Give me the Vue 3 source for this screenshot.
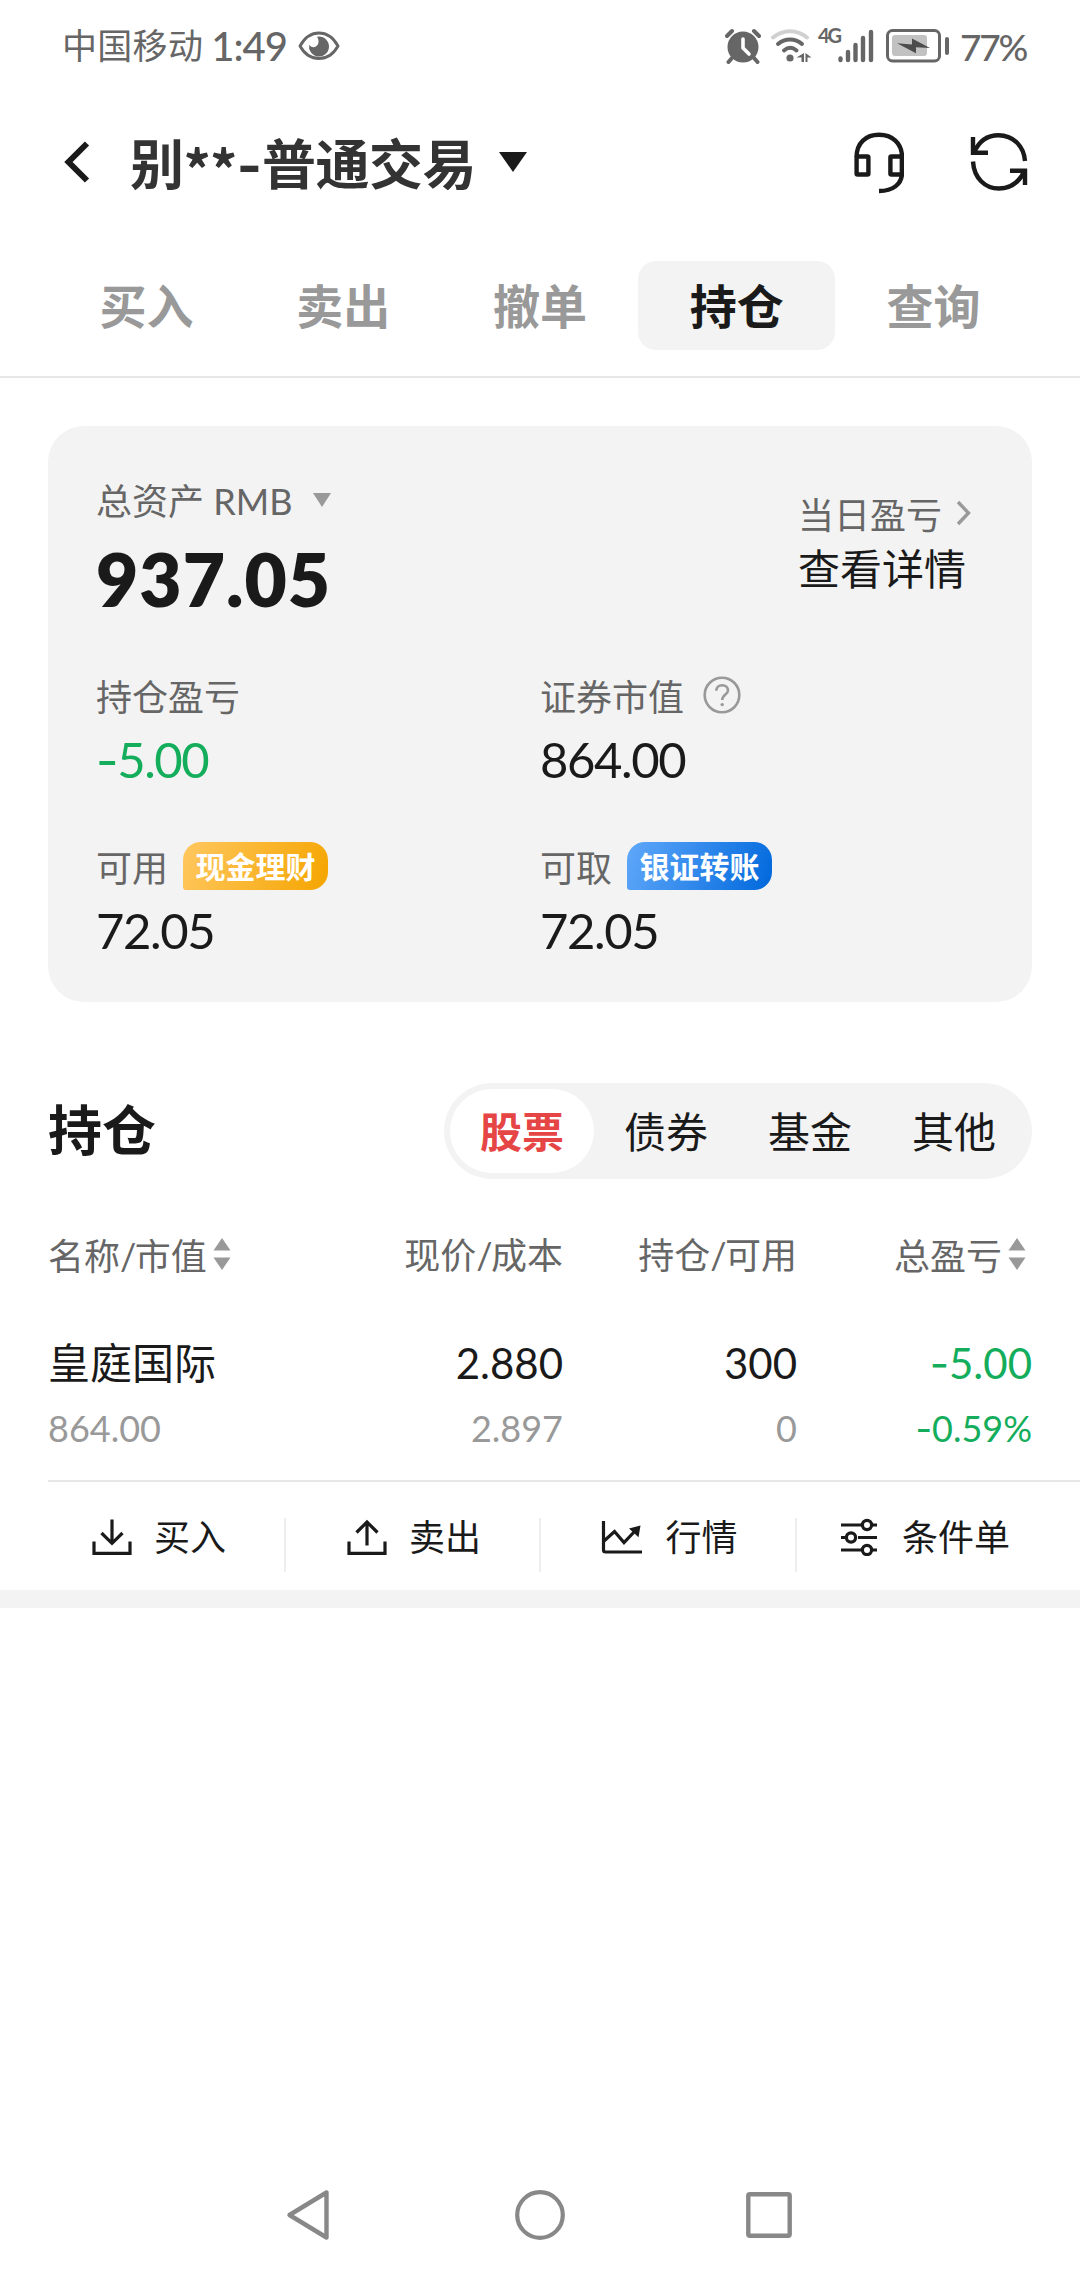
<script setup>
const tabs = ['买入', '卖出', '撤单', '持仓', '查询']
const activeTab = '持仓'
const kinds = ['股票', '债券', '基金', '其他']
const activeKind = '股票'
const holdings = [
  { name: '皇庭国际', value: '864.00', price: '2.880', cost: '2.897', qty: '300', avail: '0', profit: '5.00', rate: '0.59%' }
]
</script>

<template>
  <div class="screen">
    <header class="status">
      <span class="carrier">中国移动</span>
      <span class="time">1:49</span>
      <svg class="eye" width="42" height="30" viewBox="0 0 42 30">
        <path d="M2 15C7 6 13 2 21 2s14 4 19 13c-5 9-11 12.500-19 12.500S7 24 2 15Z" fill="none" stroke="#666" stroke-width="2.800" />
        <path d="M21 5.500a10 10 0 1 1-9.800 8c1.500 3 5 3.500 7.300 1.500 2.500-2 2.800-6 .5-9.300Z" fill="#666" />
      </svg>
      <span class="grow"></span>
      <svg class="alarm" width="36" height="36" viewBox="0 0 36 36">
        <circle cx="18" cy="19" r="15.500" fill="#666" />
        <path d="M2 8l5-5M34 8l-5-5M7 30l-3.500 4M29 30l3.500 4" stroke="#666" stroke-width="4" stroke-linecap="round" />
        <path d="M18 11v9l6 6" fill="none" stroke="#fff" stroke-width="3.600" stroke-linecap="round" stroke-linejoin="round" />
      </svg>
      <svg class="wifi" width="42" height="36" viewBox="0 0 42 36">
        <g fill="none" stroke-linecap="round" stroke-width="4">
          <path d="M3 9.500C13 1 27 1 37 9.500" stroke="#d0d0d0" />
          <path d="M8 16C15 10 25 10 32 16" stroke="#666" />
          <path d="M14 22.500c4-3.500 8.500-3.500 12.500 0" stroke="#666" />
        </g>
        <circle cx="20" cy="30" r="3.600" fill="#666" />
        <path d="M34 25v9h-2.500v-4.500h-5ZM35.500 25v9h2v-4.500h4Z" fill="#666" />
      </svg>
      <span class="net">4G</span>
      <svg class="bars" width="36" height="34" viewBox="0 0 36 34">
        <path d="M2.500 29.500v1.500M10 23v8M17.500 16v15M25 9v22M33 3v28" stroke="#666" stroke-width="4.400" stroke-linecap="round" />
      </svg>
      <svg class="battery" width="64" height="34" viewBox="0 0 64 34">
        <rect x="1.500" y="1.500" width="52" height="30.500" rx="5" fill="none" stroke="#666" stroke-width="3" />
        <rect x="6" y="6" width="35" height="21" rx="3" fill="#c2c2c2" />
        <path d="M11 14.200 26 15.500v-6l18 9.500-14-.8v6Z" fill="#4c4c4c" />
        <path d="M61 10v14" stroke="#666" stroke-width="4" stroke-linecap="round" />
      </svg>
      <span class="percent">77%</span>
    </header>

    <div class="titlebar">
      <svg class="back" width="26" height="42" viewBox="0 0 26 42">
        <path d="M23 2.500 4.500 21 23 39.500" fill="none" stroke="#1a1a1a" stroke-width="6" />
      </svg>
      <h1>别<span class="stars">**</span><span class="dash">-</span>普通交易</h1>
      <svg class="caret" width="28" height="20" viewBox="0 0 28 20"><path d="M0 0h28L14 20Z" fill="#1a1a1a" /></svg>
      <span class="grow"></span>
      <svg class="headset" width="50" height="62" viewBox="0 0 50 62">
        <g fill="none" stroke="#1a1a1a" stroke-width="4.400">
          <path d="M2.600 25C2.600 11 12 2.800 25 2.800S48 11 48 25v16c0 11-9 18-23 18" />
          <rect x="2.600" y="24.500" width="11.800" height="18" rx="1" />
          <rect x="36.400" y="24.500" width="11.600" height="18" rx="1" />
        </g>
      </svg>
      <svg class="refresh" width="58" height="60" viewBox="0 0 58 60">
        <g fill="none" stroke="#1a1a1a" stroke-width="4.400">
          <path d="M3 5v15.800h15M4 20.500C9 9 17.500 3.200 28.500 3.200 43 3.200 54 14 55 29" />
          <path d="M55 53V38.700H40M54.500 39C49 50.500 40.500 56.500 29 56.500 15 56.500 4 46 3 29.500" />
        </g>
      </svg>
    </div>

    <nav class="tabs">
      <span v-for="t in tabs" :key="t" :class="{ active: t === activeTab }">{{ t }}</span>
    </nav>

    <section class="card">
      <div class="total">
        <div>
          <div class="label">总资产 RMB<svg class="mini" width="18" height="14" viewBox="0 0 18 14"><path d="M0 0h18L9 14Z" fill="#999" /></svg></div>
          <div class="amount">937.05</div>
        </div>
        <div class="today">
          <div class="label">当日盈亏<svg class="chev" width="15" height="26" viewBox="0 0 15 26"><path d="M2 2l10.500 11L2 24" fill="none" stroke="#999" stroke-width="3.400" /></svg></div>
          <div class="detail">查看详情</div>
        </div>
      </div>
      <div class="metrics">
        <div>
          <div class="label">持仓盈亏</div>
          <div class="value green"><span class="minus">-</span>5.00</div>
        </div>
        <div>
          <div class="label">证券市值<svg class="help" width="38" height="38" viewBox="0 0 38 38">
            <g fill="none" stroke="#999" stroke-width="2.600">
              <circle cx="19" cy="19" r="17.300" />
              <path d="M13.300 14.800c0-3.600 2.500-5.600 5.900-5.600s5.800 2.200 5.800 5.200c0 4-5.800 4.300-5.800 9.600" />
            </g>
            <circle cx="19.200" cy="28.600" r="1.700" fill="#999" />
          </svg></div>
          <div class="value">864.00</div>
        </div>
        <div>
          <div class="label">可用<span class="badge gold">现金理财</span></div>
          <div class="value">72.05</div>
        </div>
        <div>
          <div class="label">可取<span class="badge blue">银证转账</span></div>
          <div class="value">72.05</div>
        </div>
      </div>
    </section>

    <section class="holdhead">
      <h2>持仓</h2>
      <div class="segment">
        <span v-for="k in kinds" :key="k" :class="{ on: k === activeKind }">{{ k }}</span>
      </div>
    </section>

    <div class="row thead">
      <span>名称<i>/</i>市值<svg class="sort" width="18" height="32" viewBox="0 0 18 32"><path d="M9 0l8.500 12.500H.5ZM9 32l8.500-12.500H.5Z" fill="#999" /></svg></span>
      <span>现价<i>/</i>成本</span>
      <span>持仓<i>/</i>可用</span>
      <span class="last">总盈亏<svg class="sort" width="18" height="32" viewBox="0 0 18 32"><path d="M9 0l8.500 12.500H.5ZM9 32l8.500-12.500H.5Z" fill="#999" /></svg></span>
    </div>
    <template v-for="h in holdings" :key="h.name">
      <div class="row main">
        <span>{{ h.name }}</span>
        <span>{{ h.price }}</span>
        <span>{{ h.qty }}</span>
        <span class="green"><span class="minus">-</span>{{ h.profit }}</span>
      </div>
      <div class="row sub">
        <span>{{ h.value }}</span>
        <span>{{ h.cost }}</span>
        <span>{{ h.avail }}</span>
        <span class="green"><span class="minus">-</span>{{ h.rate }}</span>
      </div>
    </template>

    <div class="actions">
      <div class="action">
        <svg width="40" height="38" viewBox="0 0 40 38"><g fill="none" stroke="#1a1a1a" stroke-width="3.200"><path d="M2 23.500v11.800h36V23.500" /><path d="M20 1.500v24M9.500 15 20 25.300 30.500 15" /></g></svg>
        <span>买入</span>
      </div>
      <div class="action">
        <svg width="40" height="38" viewBox="0 0 40 38"><g fill="none" stroke="#1a1a1a" stroke-width="3.200"><path d="M2 23.500v11.800h36V23.500" /><path d="M20 27.500V4M9.500 14.500 20 4l10.500 10.500" /></g></svg>
        <span>卖出</span>
      </div>
      <div class="action">
        <svg width="42" height="38" viewBox="0 0 42 38"><path d="M2.500 3v29q0 2 2 2H41M3 23l10.500-9.500L23 24.500 34 13" fill="none" stroke="#1a1a1a" stroke-width="3.200" /><path d="M39.500 7.500 28 10.500l9.500 8.800Z" fill="#1a1a1a" /></svg>
        <span>行情</span>
      </div>
      <div class="action">
        <svg width="38" height="38" viewBox="0 0 38 38"><g fill="none" stroke="#1a1a1a" stroke-width="3.200"><path d="M1 7h20.500M32 7h5M1 19.500h4M18 19.500h19M1 32h20.500M32 32h5" /><circle cx="27" cy="7" r="4.600" /><circle cx="11" cy="19.500" r="4.600" /><circle cx="27" cy="32" r="4.600" /></g></svg>
        <span>条件单</span>
      </div>
    </div>
    <div class="band"></div>

    <footer class="navbar">
      <svg width="44" height="52" viewBox="0 0 44 52"><path d="M40.500 3.500v45L3.500 26Z" fill="none" stroke="#888" stroke-width="4.400" stroke-linejoin="round" /></svg>
      <svg class="home" width="50" height="52" viewBox="0 0 50 52"><circle cx="25" cy="26" r="22.800" fill="none" stroke="#888" stroke-width="4.200" /></svg>
      <svg width="46" height="46" viewBox="0 0 46 46"><rect x="2.300" y="2.300" width="41.400" height="41.400" rx="1.500" fill="none" stroke="#888" stroke-width="4.400" /></svg>
    </footer>
  </div>
</template>

<style>
body { background: #fff; }
</style>

<style scoped>
.screen {
  width: 1080px;
  height: 2280px;
  display: flex;
  flex-direction: column;
  background: #fff;
  color: #1a1a1a;
  font-family: Lato, "Noto Sans CJK SC", sans-serif;
  overflow: hidden;
}
svg { display: block; flex: none; }
.grow { flex: 1; }
.status {
  height: 92px;
  margin-bottom: 1px;
  padding: 0 54px 0 62px;
  display: flex;
  align-items: center;
  color: #666;
  white-space: nowrap;
}
.carrier { font-size: 35px; letter-spacing: 0.3px; line-height: 44px; margin-top: -2px; }
.time { font-size: 40px; margin-left: 8px; letter-spacing: -1px; font-weight: 500; }
.eye { margin-left: 11px; }
.alarm { margin-right: 9px; }
.net { font-size: 20px; font-weight: 700; letter-spacing: -2px; width: 20px; margin: -22px 0 0 6px; }
.bars { margin-right: 12px; }
.percent { font-size: 37px; letter-spacing: -2.200px; margin-left: 10px; width: 66px; font-weight: 500; }
.titlebar {
  height: 142px;
  padding: 0 52px 0 64px;
  display: flex;
  align-items: center;
}
.back { margin-top: -4px; }
h1 {
  margin: 2px 0 0 40px;
  font-size: 54px;
  font-weight: 700;
  line-height: 70px;
  height: 70px;
  width: 342px;
  color: #333;
  letter-spacing: -0.500px;
  white-space: nowrap;
}
.stars { font-family: "Noto Sans CJK SC", sans-serif; letter-spacing: -0.800px; line-height: 0; vertical-align: -6px; }
.dash { font-family: Inter, sans-serif; line-height: 0; letter-spacing: 0; }
.caret { margin: -4px 0 0 27px; }
.headset { margin-right: 66px; margin-top: -2px; }
.refresh { margin-top: -4px; }
.tabs {
  margin-top: 26px;
  padding: 0 48px 26px;
  display: grid;
  grid-template-columns: repeat(5, 1fr);
  border-bottom: 2px solid #e7e7e7;
}
.tabs span {
  height: 89px;
  line-height: 91px;
  text-align: center;
  font-size: 47px;
  font-weight: 700;
  color: #999;
  border-radius: 18px;
}
.tabs .active { background: #f3f3f3; color: #1a1a1a; }
.card {
  margin: 48px 48px 0;
  height: 576px;
  padding: 50px 48px 0;
  box-sizing: border-box;
  border-radius: 36px;
  background: #f3f3f3;
}
.total { display: flex; justify-content: space-between; height: 156px; }
.label {
  height: 50px;
  display: flex;
  align-items: center;
  font-size: 36px;
  line-height: 48px;
  color: #666;
  white-space: nowrap;
}
.mini { margin: -3px 0 0 21px; }
.amount { font-size: 73px; line-height: 106px; font-weight: 800; height: 106px; letter-spacing: 1px; }
.today { width: 186px; padding-top: 13px; }
.today .label { height: 52px; }
.chev { margin: -4px 0 0 14px; }
.detail { font-size: 42px; line-height: 56px; white-space: nowrap; }
.metrics {
  margin-top: 40px;
  display: grid;
  grid-template-columns: 444px 1fr;
  row-gap: 45px;
}
.value { font-size: 49px; line-height: 75px; height: 76px; letter-spacing: -1.400px; white-space: nowrap; }
.minus { font-family: Inter, sans-serif; line-height: 0; }
.green { color: #14ad5c; }
.help { margin: -5px 0 0 19px; }
.badge {
  height: 48px;
  width: 145px;
  margin: -4px 0 0 15px;
  line-height: 49px;
  text-align: center;
  font-size: 30px;
  font-weight: 700;
  color: #fff;
  border-radius: 18px 18px 18px 3px;
}
.gold { background: linear-gradient(110deg, #ffc75f, #f5a500); }
.blue { background: linear-gradient(110deg, #60a8fa, #0068dc); }
.holdhead {
  margin: 81px 48px 0;
  height: 96px;
  display: flex;
  align-items: center;
  justify-content: space-between;
}
h2 { margin: 0; font-size: 54px; line-height: 100px; font-weight: 700; }
.segment {
  display: grid;
  grid-template-columns: repeat(4, 144px);
  padding: 6px;
  border-radius: 48px;
  background: #f3f3f3;
}
.segment span { height: 84px; line-height: 86px; text-align: center; font-size: 42px; border-radius: 42px; }
.segment .on { background: #fff; color: #e64545; font-weight: 700; }
.row {
  margin: 0 48px;
  height: 60px;
  display: grid;
  grid-template-columns: 280px 235px 234px 235px;
  text-align: right;
  line-height: 60px;
  white-space: nowrap;
}
.row > span:first-child { text-align: left; }
.thead { margin-top: 50px; height: 54px; font-size: 36px; line-height: 53px; color: #666; }
.thead i { font-style: normal; letter-spacing: -1.600px; }
.thead > span:first-child, .thead .last { display: flex; align-items: center; }
.thead .last { justify-content: flex-end; padding-right: 6px; }
.sort { margin: -4px 0 0 6px; }
.main { margin-top: 50px; font-size: 42px; }
.sub { margin-top: 5px; font-size: 36px; color: #999; }
.sub .green { color: #14ad5c; }
.actions {
  margin: 22px 0 0 48px;
  height: 110px;
  box-sizing: border-box;
  border-top: 2px solid #e7e7e7;
  display: grid;
  grid-template-columns: 238px 255px 256px 256px;
}
.action {
  height: 54px;
  margin-top: 36px;
  padding-bottom: 16px;
  box-sizing: border-box;
  display: flex;
  justify-content: center;
  align-items: center;
  gap: 22px;
  font-size: 36px;
  line-height: 36px;
  white-space: nowrap;
  border-right: 2px solid #eee;
}
.action:first-child { padding-right: 14px; }
.action:nth-child(2), .action:nth-child(3) { padding-left: 3px; }
.action:last-child { border-right: 0; gap: 24px; }
.band { height: 18px; background: #f3f3f3; }
.navbar {
  margin-top: auto;
  height: 130px;
  padding: 0 288px 0 286px;
  display: flex;
  align-items: center;
  justify-content: space-between;
}
.home { margin-left: 3px; }
</style>
